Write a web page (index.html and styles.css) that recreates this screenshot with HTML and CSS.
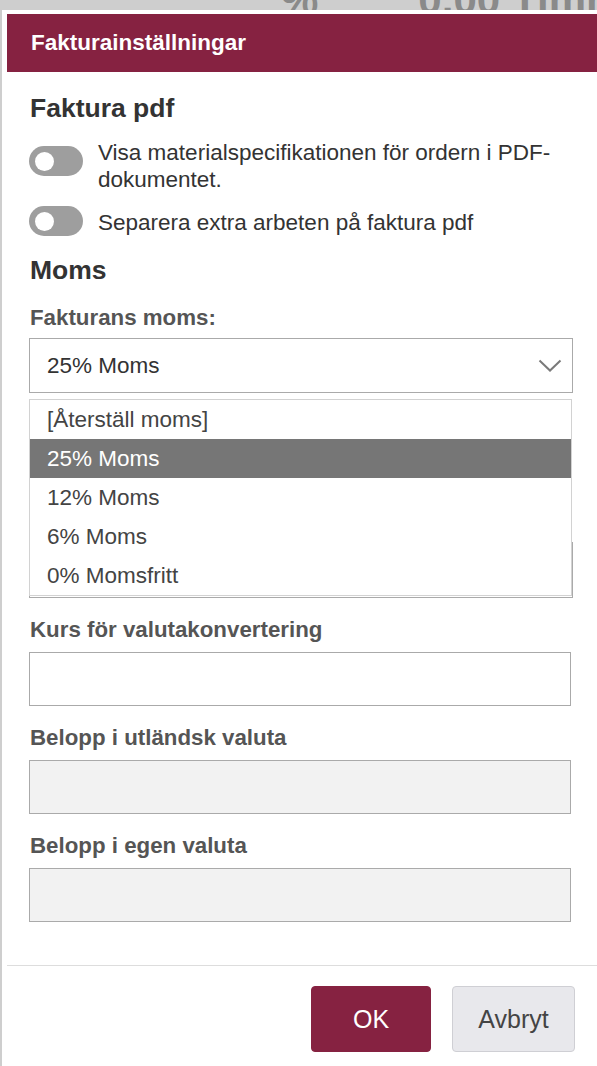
FILE: index.html
```html
<!DOCTYPE html>
<html lang="sv">
<head>
<meta charset="utf-8">
<title>Fakturainställningar</title>
<link rel="stylesheet" href="styles.css">
</head>
<body>
<div class="backdrop">
  <span class="bd-pct">%</span>
  <span class="bd-box"></span>
  <span class="bd-num">0,00</span>
  <span class="bd-unit">Timm</span>
</div>
<div class="dialog">
  <div class="dialog-header">Fakturainställningar</div>
  <div class="dialog-body">
    <h2 class="section-title first">Faktura pdf</h2>
    <div class="toggle-row">
      <span class="toggle"><span class="knob"></span></span>
      <span class="toggle-text">Visa materialspecifikationen för ordern i PDF-dokumentet.</span>
    </div>
    <div class="toggle-row second">
      <span class="toggle"><span class="knob"></span></span>
      <span class="toggle-text">Separera extra arbeten på faktura pdf</span>
    </div>
    <h2 class="section-title">Moms</h2>
    <div class="field select-field">
      <div class="label tight">Fakturans moms:</div>
      <div class="select-wrap">
        <div class="select">
          <span>25% Moms</span>
          <svg class="chevron" width="24" height="14" viewBox="0 0 24 14"><path d="M1.5 1.5 L12 11.5 L22.5 1.5" fill="none" stroke="#7a7a7a" stroke-width="2"/></svg>
        </div>
        <ul class="dropdown">
          <li>[Återställ moms]</li>
          <li class="selected">25% Moms</li>
          <li>12% Moms</li>
          <li>6% Moms</li>
          <li>0% Momsfritt</li>
        </ul>
      </div>
    </div>
    <div class="field hidden-field">
      <div class="input"></div>
    </div>
    <div class="field">
      <div class="label">Kurs för valutakonvertering</div>
      <div class="input"></div>
    </div>
    <div class="field">
      <div class="label">Belopp i utländsk valuta</div>
      <div class="input disabled"></div>
    </div>
    <div class="field">
      <div class="label">Belopp i egen valuta</div>
      <div class="input disabled"></div>
    </div>
  </div>
  <div class="dialog-footer">
    <button class="btn btn-primary">OK</button>
    <button class="btn btn-secondary">Avbryt</button>
  </div>
</div>
</body>
</html>
```
FILE: styles.css
```css
html, body {
  margin: 0;
  padding: 0;
}
body {
  background: #cecece;
  font-family: "Liberation Sans", Arial, sans-serif;
  overflow: hidden;
  width: 597px;
  height: 1066px;
}
.backdrop {
  height: 10px;
  overflow: hidden;
  display: flex;
  align-items: flex-end;
  color: #8a8a8a;
  font-weight: bold;
  font-size: 42px;
  line-height: 42px;
}
.backdrop span {
  margin-bottom: -11px;
}
.bd-pct {
  margin-left: 281px;
}
.bd-box {
  display: block;
  width: 9px;
  height: 9px;
  background: #e6e6e6;
  margin-left: 8px;
  align-self: flex-start;
}
.bd-num {
  margin-left: 92px;
}
.bd-unit {
  margin-left: 12px;
}
.dialog {
  margin-left: 2px;
  background: #fff;
  padding: 4px 0 0 5px;
  height: 1056px;
  box-sizing: border-box;
}
.dialog-header {
  height: 58px;
  background: #862241;
  color: #fff;
  font-weight: bold;
  font-size: 22.5px;
  display: flex;
  align-items: center;
  padding-left: 24px;
}
.dialog-body {
  padding: 0 24px 0 22px;
}
.section-title {
  margin: 0;
  font-size: 26.5px;
  line-height: 30px;
  font-weight: bold;
  color: #333;
  padding-left: 1px;
  margin-top: 19px;
}
.section-title.first {
  margin-top: 21px;
}
.toggle-row {
  display: flex;
  align-items: flex-start;
  margin-top: 16px;
}
.toggle-row.second {
  margin-top: 13px;
}
.toggle {
  flex: none;
  width: 54px;
  height: 30px;
  border-radius: 15px;
  background: #9e9e9e;
  display: flex;
  align-items: center;
  padding-left: 6px;
  box-sizing: border-box;
  margin-top: 7px;
}
.toggle-row.second .toggle {
  margin-top: 0;
}
.toggle-row.second .toggle-text {
  margin-top: 3px;
}
.knob {
  width: 19px;
  height: 19px;
  border-radius: 50%;
  background: #fff;
}
.toggle-text {
  margin-left: 15px;
  font-size: 22.5px;
  line-height: 27px;
  color: #333;
}
.field {
  margin-top: 20px;
}
.select-field {
  margin-top: 21px;
}
.label {
  font-size: 22.3px;
  line-height: 24px;
  font-weight: bold;
  color: #555;
  padding-left: 1px;
  margin-bottom: 10px;
}
.label.tight {
  margin-bottom: 8px;
}
.select-wrap {
  position: relative;
}
.select {
  height: 55px;
  box-sizing: border-box;
  border: 1px solid #aaa;
  display: flex;
  align-items: center;
  justify-content: space-between;
  padding: 0 10px 0 17px;
  font-size: 22.5px;
  color: #333;
}
.chevron {
  display: block;
}
.dropdown {
  position: absolute;
  left: 0;
  right: 1px;
  top: 61px;
  margin: 0;
  padding: 0;
  list-style: none;
  background: #fff;
  border: 1px solid #d2d2d2;
  z-index: 2;
}
.dropdown li {
  height: 39px;
  line-height: 39px;
  padding-left: 17px;
  font-size: 22.5px;
  color: #444;
}
.dropdown li.selected {
  background: #767676;
  color: #fff;
}
.hidden-field {
  margin-top: 149px;
}
.input {
  height: 54px;
  box-sizing: border-box;
  border: 1px solid #aaa;
  background: #fff;
  margin-right: 2px;
}
.hidden-field .input {
  margin-right: 0;
  height: 56px;
}
.input.disabled {
  background: #f2f2f2;
}
.dialog-footer {
  margin-top: 43px;
  border-top: 1px solid #ddd;
  padding: 20px 22px 0 0;
  display: flex;
  justify-content: flex-end;
  gap: 21px;
}
.btn {
  font-family: "Liberation Sans", Arial, sans-serif;
  font-size: 25px;
  height: 66px;
  border-radius: 4px;
  cursor: pointer;
}
.btn-primary {
  width: 120px;
  background: #862241;
  color: #fff;
  border: 1px solid #862241;
}
.btn-secondary {
  width: 123px;
  background: #e8e8ec;
  color: #444;
  border: 1px solid #cfcfd4;
}
```
